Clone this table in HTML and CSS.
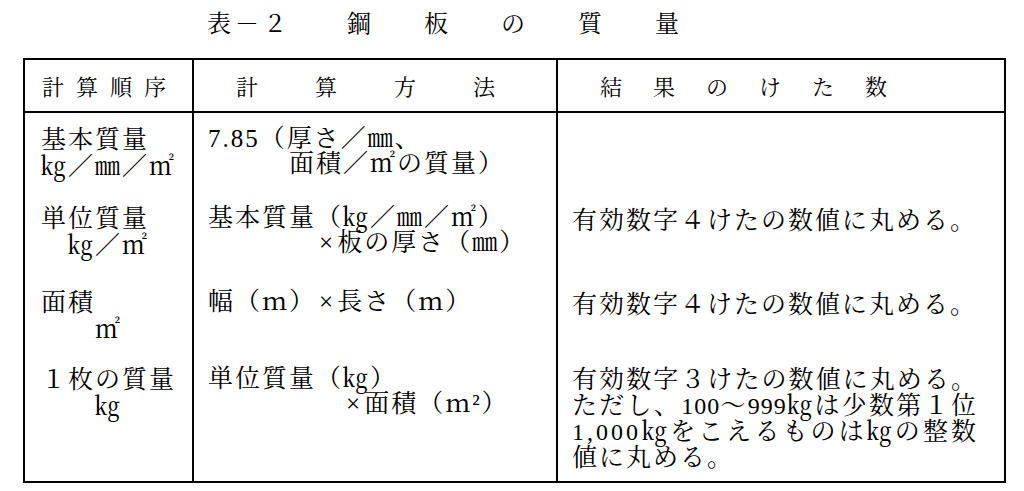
FILE: index.html
```html
<!DOCTYPE html>
<html lang="ja">
<head>
<meta charset="utf-8">
<title>表－２ 鋼板の質量</title>
<link rel="stylesheet" href="styles.css">
</head>
<body>
<div class="page">
  <h1 class="title"><span class="tno">表－２</span><span>鋼</span><span>板</span><span>の</span><span>質</span><span>量</span></h1>
  <div class="tbl">
    <div class="th c1 h1">計算順序</div>
    <div class="th c2 h2">計算方法</div>
    <div class="th c3 h3">結果のけた数</div>

    <div class="td c1"><div>基本質量</div><div>㎏／㎜／㎡</div></div>
    <div class="td c2"><div>7.85（厚さ／㎜、</div><div>　　　面積／㎡の質量）</div></div>
    <div class="td c3"></div>

    <div class="td c1"><div>単位質量</div><div>　㎏／㎡</div></div>
    <div class="td c2"><div>基本質量（㎏／㎜／㎡）</div><div>　　　　<span class="x">×</span>板の厚さ（㎜）</div></div>
    <div class="td c3"><div>有効数字４けたの数値に丸める。</div></div>

    <div class="td c1"><div>面積</div><div>　　㎡</div></div>
    <div class="td c2"><div>幅（ｍ）<span class="x">×</span>長さ（ｍ）</div></div>
    <div class="td c3"><div>有効数字４けたの数値に丸める。</div></div>

    <div class="td c1"><div>１枚の質量</div><div>　　㎏</div></div>
    <div class="td c2"><div>単位質量（㎏）</div><div>　　　　　<span class="x">×</span>面積（ｍ²）</div></div>
    <div class="td c3 multi">
      <div class="jl">有効数字３けたの数値に丸める。</div>
      <div class="jl">ただし、<span class="n">100</span>～<span class="n">999</span>㎏は少数第１位</div>
      <div class="jl"><span class="n wide">1,000</span>㎏をこえるものは㎏の整数</div>
      <div>値に丸める。</div>
    </div>
  </div>
</div>
</body>
</html>
```

FILE: styles.css
```css
html, body {
  margin: 0;
  padding: 0;
  background: #ffffff;
}

body {
  color: #000000;
  font-family: "Liberation Serif", "Noto Serif CJK JP", "Noto Sans CJK JP", serif;
}

.page {
  padding: 12px 0 0 23px;
}

.title {
  margin: 0 0 22px 0;
  padding-left: 184px;
  display: flex;
  gap: 53px;
  font-size: 24px;
  line-height: 24px;
  font-weight: normal;
}

.tno {
  letter-spacing: 4px;
  margin-right: 3px;
}

.tbl {
  display: grid;
  grid-template-columns: 167px 364px 448px;
  grid-template-rows: 53px 79px 84px 77px 128px;
  width: max-content;
  border: 2px solid #000000;
}

.c2,
.c3 {
  border-left: 2px solid #000000;
}

.th {
  display: flex;
  align-items: center;
  padding-top: 5px;
  font-size: 22px;
  line-height: 24px;
  border-bottom: 2px solid #000000;
  white-space: nowrap;
}

.h1 {
  padding-left: 17px;
  letter-spacing: 12px;
}

.h2 {
  padding-left: 42px;
  letter-spacing: 57px;
}

.h3 {
  padding-left: 42px;
  letter-spacing: 31px;
}

.td {
  font-size: 25px;
  line-height: 25px;
  letter-spacing: 2px;
  white-space: nowrap;
  padding-top: 13px;
}

.td.c1 {
  padding-left: 16px;
  line-height: 27px;
}

.td.c2 {
  padding-left: 14px;
}

.td.c3 {
  padding-left: 14px;
  padding-top: 16px;
}

.td.multi {
  padding-top: 14px;
  line-height: 26px;
}

.x {
  margin: 0 4px 0 3px;
  letter-spacing: 0;
}

.n {
  font-size: 24px;
  letter-spacing: 1px;
}

.n.wide {
  letter-spacing: 3px;
}

.jl {
  width: 406px;
  text-align: justify;
  text-align-last: justify;
}
```
